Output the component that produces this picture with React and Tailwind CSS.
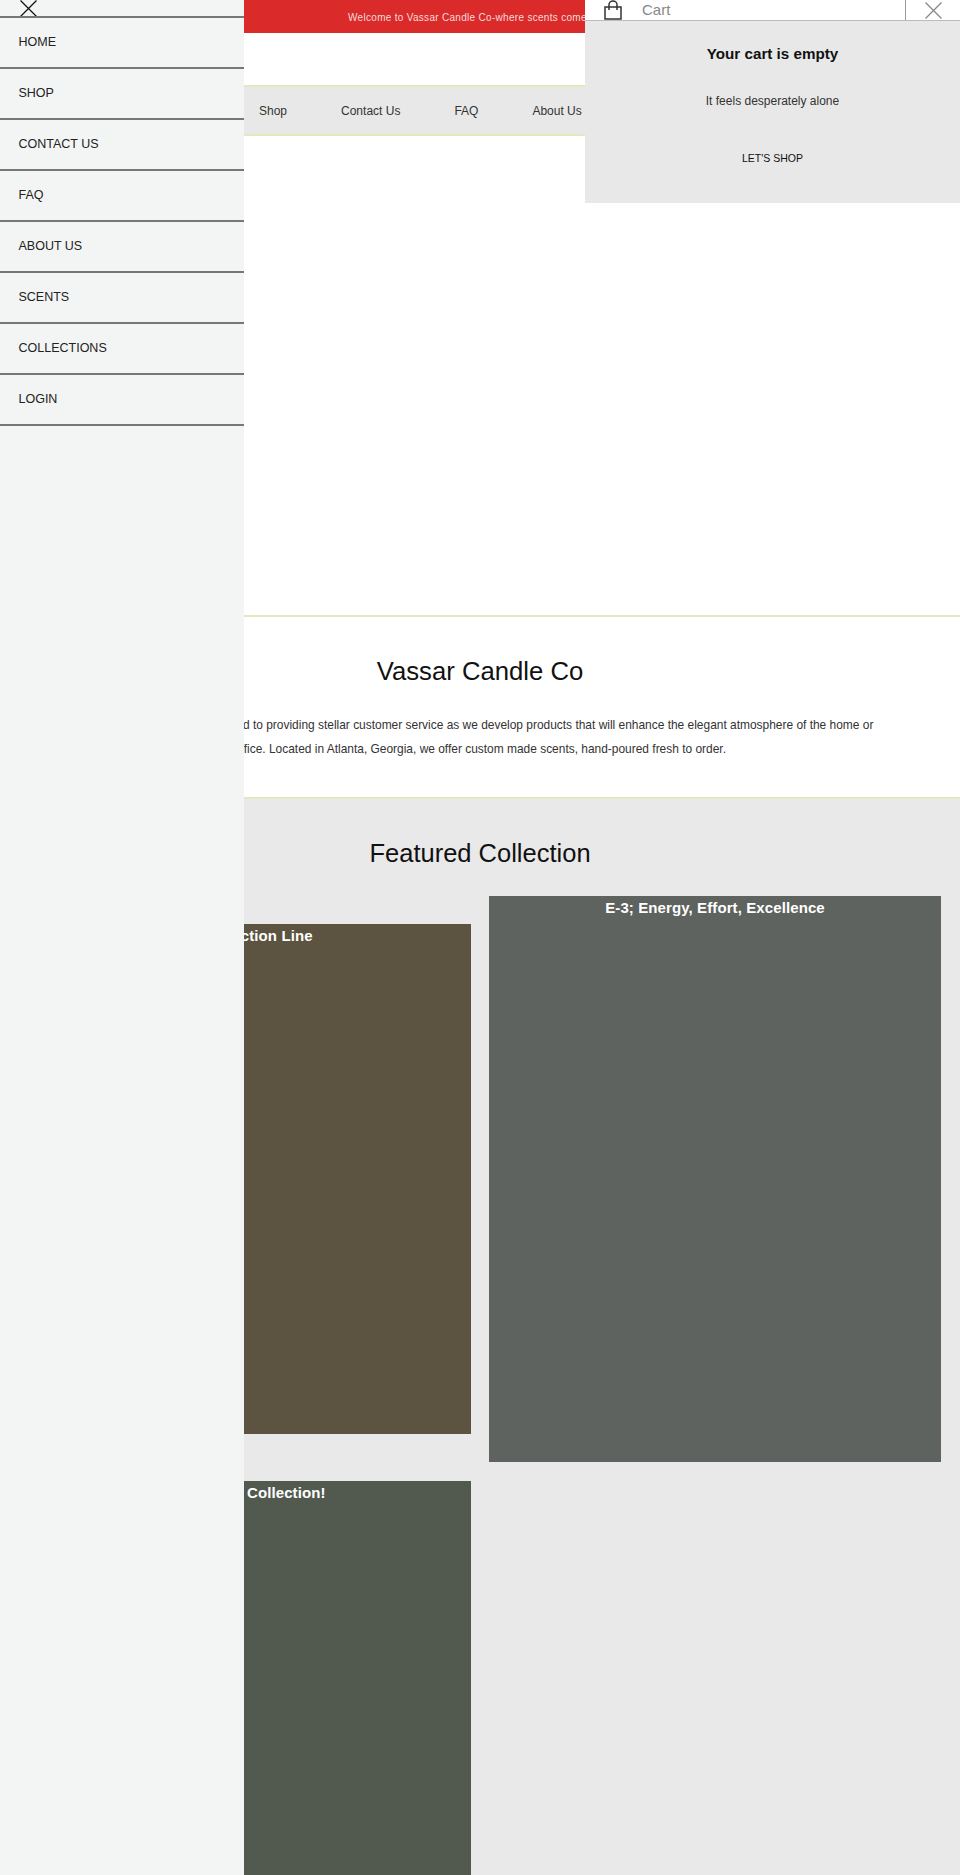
import React from 'react'

const menuItems = ['HOME', 'SHOP', 'CONTACT US', 'FAQ', 'ABOUT US', 'SCENTS', 'COLLECTIONS', 'LOGIN']
const navItems = ['Shop', 'Contact Us', 'FAQ', 'About Us']
const font = 'font-["Liberation_Sans",Arial,sans-serif]'

function CloseIcon({ className, stroke = 'currentColor' }) {
  return (
    <svg className={className} viewBox="0 0 17 17" fill="none" stroke={stroke} strokeWidth="1.3">
      <path d="M0.5 0.5l16 16M16.5 0.5l-16 16" />
    </svg>
  )
}

function CollectionCard({ title, color, height }) {
  return (
    <div className={`w-[452px] pt-[2px] text-center ${color} ${height}`}>
      <h3 className="text-[15px] leading-[20px] font-bold tracking-[0.1px] text-white">{title}</h3>
    </div>
  )
}

function MenuDrawer() {
  return (
    <aside className="absolute left-0 top-0 z-10 h-[1875px] w-[244px] bg-[#f3f5f4] text-[#222]">
      <div className="h-[18px] overflow-hidden border-b-2 border-[#777] pl-[20px]">
        <CloseIcon className="h-[17px] w-[17px]" stroke="#111" />
      </div>
      {menuItems.map((item) => (
        <div key={item} className="flex h-[51px] items-center border-b-2 border-[#777] pl-[18.5px] text-[12.5px]">
          {item}
        </div>
      ))}
    </aside>
  )
}

function CartDrawer() {
  return (
    <aside className="absolute right-0 top-0 z-10 h-[203px] w-[375px] bg-[#e8e8e8] text-center">
      <div className="flex h-[21px] items-center border-b border-[#bbb] bg-white">
        <svg className="ml-[19px] h-[20px] w-[18px]" viewBox="0 0 18 20" fill="none" stroke="#333" strokeWidth="1.5">
          <path d="M1 7h16v12H1zM5 10V4.5a4 3.5 0 018 0V10" />
        </svg>
        <span className="ml-[20px] text-[15px] text-[#888]">Cart</span>
        <div className="ml-auto flex h-full w-[55px] items-center border-l border-[#999] pl-[19px]">
          <CloseIcon className="h-[17px] w-[17px]" stroke="#888" />
        </div>
      </div>
      <h2 className="mt-[23px] text-[15.2px] leading-[20px] font-bold text-[#111]">Your cart is empty</h2>
      <p className="mt-[27px] text-[12px] leading-[20px] text-[#333]">It feels desperately alone</p>
      <div className="mt-[37px] text-[10.5px] leading-[20px] text-[#111]">LET'S SHOP</div>
    </aside>
  )
}

export default function App() {
  return (
    <div className={`relative h-[1875px] w-[960px] overflow-hidden bg-white ${font}`}>
      <MenuDrawer />
      <CartDrawer />

      <div className="flex h-[33px] items-center justify-center bg-[#db2a2a] pt-[1px] text-[10px] tracking-[0.3px] text-[#f4dcdc]">
        Welcome to Vassar Candle Co-where scents come alive
      </div>
      <div className="h-[52px]" />

      <nav className="flex h-[51px] items-center gap-[54px] border-y-2 border-[#e3e8c0] bg-[#e8e8e8] pl-[259px] text-[12px] text-[#333]">
        {navItems.map((item) => (
          <span key={item}>{item}</span>
        ))}
      </nav>

      <div className="h-[479px]" />

      <section className="h-[184px] border-y-2 border-[#e3e8c0] text-center">
        <h1 className="mt-[36px] text-[25.7px] leading-[36px] text-[#111]">Vassar Candle Co</h1>
        <p className="mx-auto mt-[24px] w-[800px] text-[11.95px] leading-[24px] text-[#333]">
          Vassar Candle Co is dedicated to providing stellar customer service as we develop products that will enhance the elegant atmosphere of the home or office. Located in Atlanta, Georgia, we offer custom made scents, hand-poured fresh to order.
        </p>
      </section>

      <section className="h-[1076px] bg-[#e9e9e9]">
        <h2 className="pt-[36px] text-center text-[25.5px] leading-[36px] text-[#111]">Featured Collection</h2>
        <div className="mt-[25px] flex gap-[18px] pl-[19px]">
          <div className="flex flex-col gap-[47px] pt-[28px]">
            <CollectionCard title="Art Collection Line" color="bg-[#5c5340]" height="h-[510px]" />
            <CollectionCard title="The Winter Collection!" color="bg-[#525a50]" height="h-[566px]" />
          </div>
          <div>
            <CollectionCard title="E-3; Energy, Effort, Excellence" color="bg-[#5f6360]" height="h-[566px]" />
          </div>
        </div>
      </section>
    </div>
  )
}
